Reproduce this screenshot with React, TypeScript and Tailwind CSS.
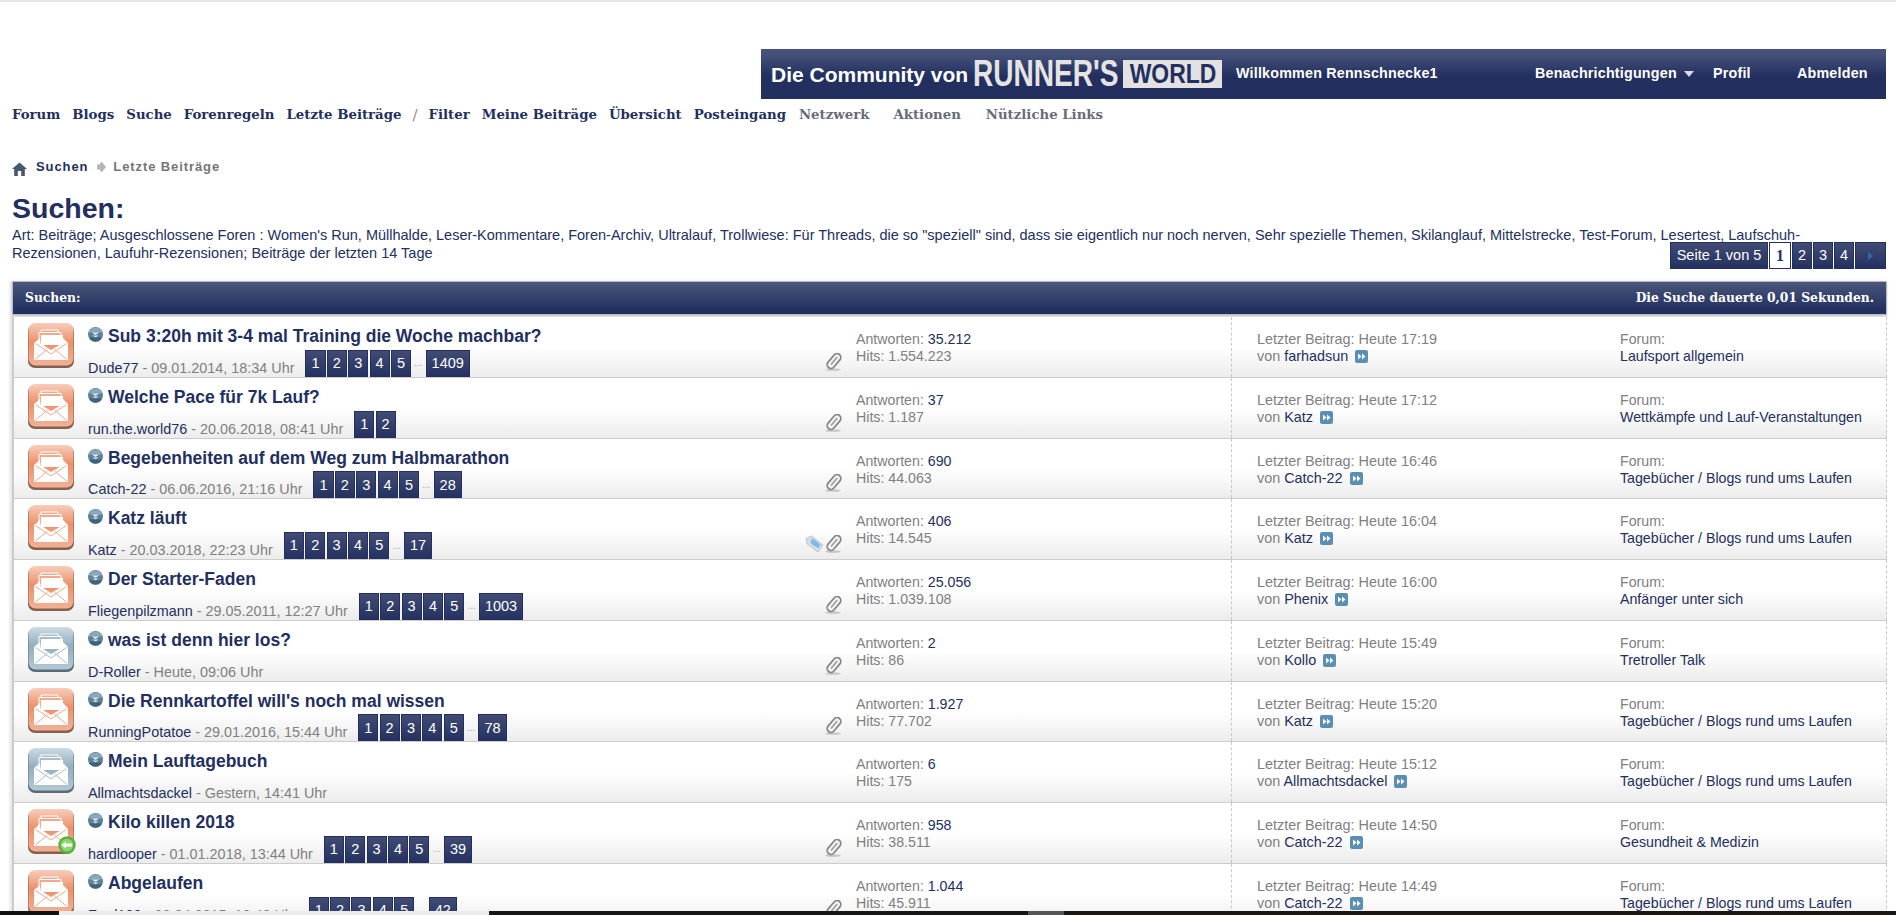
import React from "react";

type Row = {
  title: string;
  user: string;
  date: string;
  last?: string;
  answers: string;
  hits: string;
  time: string;
  by: string;
  forum: string;
  gray?: boolean;
  clip?: boolean;
  tag?: boolean;
  badge?: boolean;
};

const rows: Row[] = [
  { title: "Sub 3:20h mit 3-4 mal Training die Woche machbar?", user: "Dude77", date: "09.01.2014, 18:34 Uhr", last: "1409", answers: "35.212", hits: "1.554.223", time: "Heute 17:19", by: "farhadsun", forum: "Laufsport allgemein", clip: true },
  { title: "Welche Pace für 7k Lauf?", user: "run.the.world76", date: "20.06.2018, 08:41 Uhr", last: "2only", answers: "37", hits: "1.187", time: "Heute 17:12", by: "Katz", forum: "Wettkämpfe und Lauf-Veranstaltungen", clip: true },
  { title: "Begebenheiten auf dem Weg zum Halbmarathon", user: "Catch-22", date: "06.06.2016, 21:16 Uhr", last: "28", answers: "690", hits: "44.063", time: "Heute 16:46", by: "Catch-22", forum: "Tagebücher / Blogs rund ums Laufen", clip: true },
  { title: "Katz läuft", user: "Katz", date: "20.03.2018, 22:23 Uhr", last: "17", answers: "406", hits: "14.545", time: "Heute 16:04", by: "Katz", forum: "Tagebücher / Blogs rund ums Laufen", clip: true, tag: true },
  { title: "Der Starter-Faden", user: "Fliegenpilzmann", date: "29.05.2011, 12:27 Uhr", last: "1003", answers: "25.056", hits: "1.039.108", time: "Heute 16:00", by: "Phenix", forum: "Anfänger unter sich", clip: true },
  { title: "was ist denn hier los?", user: "D-Roller", date: "Heute, 09:06 Uhr", answers: "2", hits: "86", time: "Heute 15:49", by: "Kollo", forum: "Tretroller Talk", gray: true, clip: true },
  { title: "Die Rennkartoffel will's noch mal wissen", user: "RunningPotatoe", date: "29.01.2016, 15:44 Uhr", last: "78", answers: "1.927", hits: "77.702", time: "Heute 15:20", by: "Katz", forum: "Tagebücher / Blogs rund ums Laufen", clip: true },
  { title: "Mein Lauftagebuch", user: "Allmachtsdackel", date: "Gestern, 14:41 Uhr", answers: "6", hits: "175", time: "Heute 15:12", by: "Allmachtsdackel", forum: "Tagebücher / Blogs rund ums Laufen", gray: true },
  { title: "Kilo killen 2018", user: "hardlooper", date: "01.01.2018, 13:44 Uhr", last: "39", answers: "958", hits: "38.511", time: "Heute 14:50", by: "Catch-22", forum: "Gesundheit & Medizin", clip: true, badge: true },
  { title: "Abgelaufen", user: "Fred100", date: "08.04.2015, 10:40 Uhr", last: "42", answers: "1.044", hits: "45.911", time: "Heute 14:49", by: "Catch-22", forum: "Tagebücher / Blogs rund ums Laufen", clip: true },
];

function Envelope({ gray, id }: { gray?: boolean; id: string }) {
  const top = gray ? "#ccdae3" : "#f7cdbb";
  const mid = gray ? "#93aebf" : "#ec9069";
  const low = gray ? "#b3c8d4" : "#f3b197";
  const edge = gray ? "#5b6a74" : "#85604f";
  const line = gray ? "#a6bdcb" : "#f1a98c";
  return (
    <svg width="46" height="45" viewBox="0 0 46 45" className="block">
      <defs>
        <linearGradient id={id} x1="0" y1="0" x2="0" y2="1">
          <stop offset="0" stopColor={top} />
          <stop offset="0.45" stopColor={mid} />
          <stop offset="1" stopColor={low} />
        </linearGradient>
      </defs>
      <rect x="0" y="1" width="46" height="44" rx="7" fill={edge} />
      <rect x="0.5" y="0" width="45" height="42.5" rx="7" fill={`url(#${id})`} />
      <path d="M13 7 H30 V17 H13 Z" fill={line} stroke="#fff" strokeWidth="1" />
      <path d="M11 9.5 H33 V19 H11 Z" fill={line} stroke="#fff" strokeWidth="1" />
      <path d="M13 12 H35 V22 H13 Z" fill="#fff" />
      <path d="M6 20 L12 15 V20 L23 27 L35 20 V15 L40 20 V37 H6 Z" fill="#fff" />
      <path d="M7 36.5 L19.5 26 M39 36.5 L26.5 26 M7.5 20.5 L23 31 L38.5 20.5" fill="none" stroke={line} strokeWidth="1" />
    </svg>
  );
}

function Dot() {
  return (
    <svg width="15" height="15" viewBox="0 0 15 15" className="block shrink-0">
      <circle cx="7.5" cy="7.5" r="7.5" fill="#5d8199" />
      <path d="M0.5 5.5 A7.5 7.5 0 0 1 14.5 5.5 Z" fill="#8aa8bb" />
      <path d="M3.8 5.6 H11.2 L7.5 8 Z" fill="#e4ecf1" />
      <path d="M4.5 8.4 L7.5 10.4 L10.5 8.4 Z" fill="#dbe5ea" />
      <path d="M1 10.5 A7.5 7.5 0 0 0 14 10.5 Z" fill="#3f6177" />
    </svg>
  );
}

function Clip() {
  return (
    <svg width="18" height="18" viewBox="0 0 18 18" className="block">
      <ellipse cx="8" cy="16.6" rx="8" ry="1.2" fill="#c4c4c4" />
      <g transform="rotate(40 9 8)">
        <rect x="5.2" y="-0.5" width="7.6" height="17" rx="3.8" fill="#f1f1f1" stroke="#858585" strokeWidth="1.7" />
        <path d="M9 3.5 V12" stroke="#9a9a9a" strokeWidth="1.5" strokeLinecap="round" />
      </g>
    </svg>
  );
}

function Tag() {
  return (
    <svg width="19" height="18" viewBox="0 0 19 18" className="block">
      <path d="M1 3.5 L6.5 1 L18 10 L13 17 L2 9 Z" fill="#d5dde2" stroke="#b4bec4" strokeWidth="0.8" />
      <path d="M6 5 L8.5 4 L15.5 9.8 L13 13.2 L6 8.5 Z" fill="#7db9ea" />
    </svg>
  );
}

function Jump() {
  return (
    <svg width="13" height="13" viewBox="0 0 13 13" className="block">
      <rect x="0" y="0" width="13" height="13" rx="2" fill="#5b8eb3" />
      <path d="M3 3.5 L6.5 6.5 L3 9.5 Z M7 3.5 L10.5 6.5 L7 9.5 Z" fill="#fff" />
    </svg>
  );
}

function Pg({ n }: { n: string }) {
  return (
    <span className="flex h-[27px] min-w-[20px] items-center justify-center border border-[#222f5f] bg-linear-to-b from-[#414c74] to-[#253261] px-[5px] text-[14.5px] leading-none text-white">
      {n}
    </span>
  );
}

function Pages({ last }: { last: string }) {
  if (last === "2only") {
    return (
      <div className="ml-[11px] flex items-end gap-[1.3px]">
        <Pg n="1" />
        <Pg n="2" />
      </div>
    );
  }
  return (
    <div className="ml-[11px] flex items-center gap-[1.3px]">
      <Pg n="1" />
      <Pg n="2" />
      <Pg n="3" />
      <Pg n="4" />
      <Pg n="5" />
      <span className="w-[12px] text-center text-[10px] leading-[14px] text-[#aaaaaa]">...</span>
      <Pg n={last} />
    </div>
  );
}

function RowItem({ r, i }: { r: Row; i: number }) {
  return (
    <div className="flex h-[60.75px] shrink-0 border-b border-l-2 border-[#cccccc] bg-linear-to-b from-white from-50% to-[#ececec]">
      <div className="relative w-[74px] shrink-0 pl-[14px] pt-[6px]">
        <Envelope gray={r.gray} id={`env${i}`} />
        {r.badge && (
          <svg width="18" height="18" viewBox="0 0 18 18" className="absolute left-[44px] top-[33px]">
            <circle cx="9" cy="9" r="8.7" fill="#55b33c" />
            <circle cx="9" cy="9" r="6.3" fill="#8fd46e" />
            <path d="M3.5 9 L8 5.5 V7.6 H14 V10.4 H8 V12.5 Z" fill="#fff" />
          </svg>
        )}
      </div>
      <div className="relative flex w-[768px] shrink-0 flex-col">
        <div className="flex h-[33px] items-start pt-[7px]">
          <div className="mt-[3px] mr-[5px]">
            <Dot />
          </div>
          <a className="whitespace-nowrap text-[17.5px] font-bold leading-[24px] text-[#222f5f]">{r.title}</a>
        </div>
        <div className="flex h-[27px] items-end">
          <span className="whitespace-nowrap text-[14.4px] leading-[18px] text-[#808080]">
            <span className="text-[#222f5f]">{r.user}</span> - {r.date}
          </span>
          {r.last && <Pages last={r.last} />}
        </div>
        <div className="absolute bottom-[6px] right-[13px] flex items-end gap-[1px]">
          {r.tag && <Tag />}
          {r.clip && <Clip />}
        </div>
      </div>
      <div className="w-[376px] shrink-0 border-r border-dashed border-[#c8c8c8] pt-[14px] text-[14.2px] leading-[17px] text-[#808080]">
        <div>
          Antworten: <span className="text-[#222f5f]">{r.answers}</span>
        </div>
        <div>Hits: {r.hits}</div>
      </div>
      <div className="w-[388px] shrink-0 pl-[25px] pt-[14px] text-[14.4px] leading-[17px] text-[#808080]">
        <div>Letzter Beitrag: {r.time}</div>
        <div className="flex items-center gap-[7px]">
          <span>
            von <span className="text-[#222f5f]">{r.by}</span>
          </span>
          <Jump />
        </div>
      </div>
      <div className="flex-1 border-r border-dashed border-[#c8c8c8] pt-[14px] text-[14.2px] leading-[17px] text-[#808080]">
        <div>Forum:</div>
        <div className="text-[#222f5f]">{r.forum}</div>
      </div>
    </div>
  );
}

function NavLink({ t, gray }: { t: string; gray?: boolean }) {
  return <a className={gray ? "text-[#686c78]" : "text-[#222f5f]"}>{t}</a>;
}

export default function App() {
  return (
    <div className="relative h-[915px] w-full overflow-hidden bg-white font-['Liberation_Sans',sans-serif]">
      <div className="h-[2px] bg-[#e6e6e6]" />

      <div className="mt-[47px] flex justify-end pr-[10px]">
        <div className="flex h-[50px] w-[1125px] items-center whitespace-nowrap bg-linear-to-b from-[#46527a] from-10% to-[#222f5f] to-55% pl-[10px] font-bold text-white">
          <span className="w-[202px] shrink-0 text-[21px] leading-none">Die Community von</span>
          <div className="flex h-[28px] w-[249px] shrink-0 items-center">
            <span className="w-[150px] origin-left scale-x-[0.78] text-[36px] leading-none text-[#e4e4e4]">RUNNER'S</span>
            <span className="flex h-[28px] w-[99px] items-center justify-center bg-[#e2e2e2] text-[#222f5f]">
              <span className="scale-x-[0.85] text-[27px] leading-none">WORLD</span>
            </span>
          </div>
          <span className="ml-[14px] w-[299px] shrink-0 text-[14.3px] tracking-[0.2px]">Willkommen Rennschnecke1</span>
          <span className="w-[149px] shrink-0 text-[14.3px] tracking-[0.2px]">Benachrichtigungen</span>
          <span className="h-0 w-0 border-x-[5.5px] border-t-[6px] border-x-transparent border-t-[#d8dbe4]" />
          <span className="ml-[19px] w-[84px] shrink-0 text-[14.3px] tracking-[0.2px]">Profil</span>
          <span className="text-[14.3px] tracking-[0.2px]">Abmelden</span>
        </div>
      </div>

      <nav className="mt-[6px] flex h-[20px] items-center whitespace-nowrap pl-[12px] font-['DejaVu_Serif',serif] text-[13.3px] font-bold leading-[20px]">
        <NavLink t="Forum" />
        <span className="w-[12px]" />
        <NavLink t="Blogs" />
        <span className="w-[12px]" />
        <NavLink t="Suche" />
        <span className="w-[12px]" />
        <NavLink t="Forenregeln" />
        <span className="w-[12px]" />
        <NavLink t="Letzte Beiträge" />
        <span className="mx-[11px] text-[15px] font-normal text-[#8a8a8a]">/</span>
        <NavLink t="Filter" />
        <span className="w-[12px]" />
        <NavLink t="Meine Beiträge" />
        <span className="w-[12px]" />
        <NavLink t="Übersicht" />
        <span className="w-[12px]" />
        <NavLink t="Posteingang" />
        <span className="w-[13px]" />
        <NavLink t="Netzwerk" gray />
        <span className="w-[24px]" />
        <NavLink t="Aktionen" gray />
        <span className="w-[25px]" />
        <NavLink t="Nützliche Links" gray />
      </nav>

      <div className="mt-[34px] flex h-[16px] items-center pl-[12px] text-[13px] font-bold tracking-[0.9px]">
        <svg width="15" height="14" viewBox="0 0 15 14" className="mt-[3px] block">
          <path d="M7.5 0.5 L15 7 H12.8 V14 H9.2 V9 H5.8 V14 H2.2 V7 H0 Z" fill="#45586f" />
        </svg>
        <span className="ml-[9px] text-[#222f5f]">Suchen</span>
        <svg width="11" height="12" viewBox="0 0 11 12" className="ml-[8px] block">
          <path d="M5.5 0.5 L10 6 L5.5 11.5 L3.5 8.5 H1 V3.5 H3.5 Z" fill="#b5b5b5" />
        </svg>
        <span className="ml-[6px] text-[#757575]">Letzte Beiträge</span>
      </div>

      <div className="mx-[12px] mt-[17px]">
        <h1 className="text-[28.5px] font-bold leading-[33px] text-[#222f5f]">Suchen:</h1>
        <p className="mt-[1px] w-[1820px] text-[14.5px] leading-[18px] text-[#222f5f]">
          Art: Beiträge; Ausgeschlossene Foren : Women's Run, Müllhalde, Leser-Kommentare, Foren-Archiv, Ultralauf, Trollwiese: Für Threads, die so "speziell" sind, dass sie eigentlich nur noch nerven, Sehr spezielle Themen, Skilanglauf, Mittelstrecke, Test-Forum, Lesertest, Laufschuh-Rezensionen, Laufuhr-Rezensionen; Beiträge der letzten 14 Tage
        </p>
        <div className="mt-[-20px] flex justify-end gap-[1px] text-[14.5px] text-white">
          <span className="relative flex h-[27px] w-[98px] items-center justify-center border border-[#222f5f] bg-linear-to-b from-[#414c74] to-[#253261]">Seite 1 von 5</span>
          <span className="relative flex h-[27px] w-[22px] items-center justify-center border border-[#222f5f] bg-white font-['Liberation_Serif',serif] text-[16px] font-bold text-[#222f5f]">1</span>
          <span className="relative flex h-[27px] w-[20px] items-center justify-center border border-[#222f5f] bg-linear-to-b from-[#414c74] to-[#253261]">2</span>
          <span className="relative flex h-[27px] w-[20px] items-center justify-center border border-[#222f5f] bg-linear-to-b from-[#414c74] to-[#253261]">3</span>
          <span className="relative flex h-[27px] w-[20px] items-center justify-center border border-[#222f5f] bg-linear-to-b from-[#414c74] to-[#253261]">4</span>
          <span className="relative mr-[-2px] flex h-[27px] w-[31px] items-center justify-center border border-[#222f5f] bg-linear-to-b from-[#414c74] to-[#253261]">
            <span className="h-0 w-0 border-y-[4px] border-l-[5px] border-y-transparent border-l-[#2f6aa8]" />
          </span>
        </div>
      </div>

      <div className="mt-[12px] ml-[12px] mr-[9px] shadow-[-2px_0_3px_rgba(0,0,0,0.12)]">
        <div className="flex h-[34px] items-center justify-between border border-[#b9bcc4] bg-linear-to-b from-[#4a5679] to-[#222f5f] to-90% pl-[12px] pr-[12px] font-['DejaVu_Serif',serif] text-[12.3px] font-bold text-white shadow-[0_2px_2px_rgba(0,0,0,0.2)]">
          <span>Suchen:</span>
          <span>Die Suche dauerte 0,01 Sekunden.</span>
        </div>
        <div className="mt-[2px] flex flex-col">
          {rows.map((r, i) => (
            <RowItem key={i} r={r} i={i} />
          ))}
        </div>
      </div>

      <div className="absolute inset-x-0 bottom-0 flex h-[4px]">
        <div className="w-[59px] bg-[#111111]" />
        <div className="w-[430px] bg-[#ececec]" />
        <div className="w-[539px] bg-[#1a1511]" />
        <div className="w-[36px] bg-[#555555]" />
        <div className="flex-1 bg-[#1c1510]" />
      </div>
    </div>
  );
}
